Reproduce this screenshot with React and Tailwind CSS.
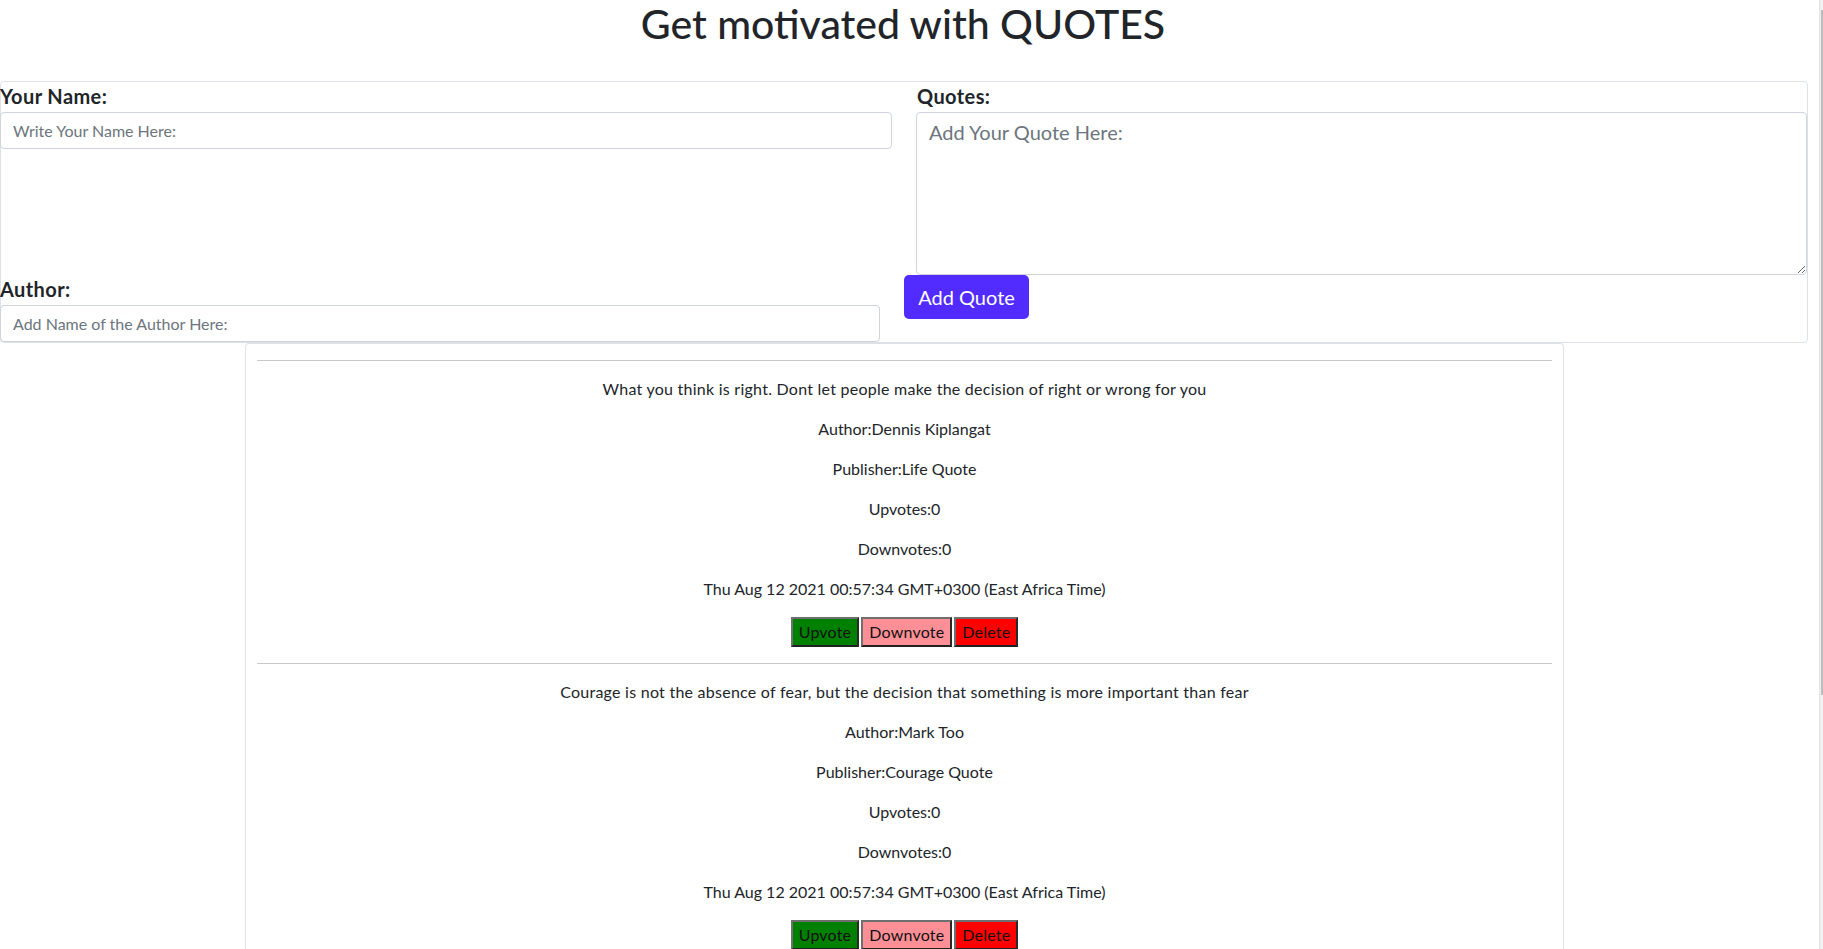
import React from "react";

const quotes = [
  {
    text: "What you think is right. Dont let people make the decision of right or wrong for you",
    author: "Dennis Kiplangat",
    publisher: "Life Quote",
  },
  {
    text: "Courage is not the absence of fear, but the decision that something is more important than fear",
    author: "Mark Too",
    publisher: "Courage Quote",
  },
];

const date = "Thu Aug 12 2021 00:57:34 GMT+0300 (East Africa Time)";

function VoteButton({ label, className }) {
  return (
    <button
      className={`h-[30px] px-[6px] text-[16px] leading-[24px] tracking-[0.2px] text-[#111] border-2 border-t-[#6f6f6f] border-l-[#6f6f6f] border-b-[#202020] border-r-[#2a2a2a] ${className}`}
    >
      {label}
    </button>
  );
}

function Quote({ q }) {
  return (
    <div>
      <hr className="border-0 border-t border-[#c8c8c8] my-[16px]" />
      <div className="text-center text-[16px] leading-[24px] text-[#212529]">
        <p className="mb-[16px] tracking-[0.25px]">{q.text}</p>
        <p className="mb-[16px]">Author:{q.author}</p>
        <p className="mb-[16px]">Publisher:{q.publisher}</p>
        <p className="mb-[16px]">Upvotes:0</p>
        <p className="mb-[16px]">Downvotes:0</p>
        <p className="mb-[16px]">{date}</p>
        <div className="flex justify-center gap-[2px]">
          <VoteButton label="Upvote" className="bg-[#008000]" />
          <VoteButton label="Downvote" className="bg-[#fe8f96]" />
          <VoteButton label="Delete" className="bg-[#ff0000]" />
        </div>
      </div>
    </div>
  );
}

export default function App() {
  return (
    <div
      className="relative w-full h-[949px] overflow-hidden bg-white text-[#212529]"
      style={{ fontFamily: "Lato, 'Noto Sans', sans-serif" }}
    >
      <h1 className="w-[1806px] text-center text-[41px] leading-[48px] font-medium text-[#212529] mb-[33px]">
        Get motivated with QUOTES
      </h1>

      <div className="flex w-[1808px] border border-[#dee2e6] rounded-[4px]">
        <div className="flex flex-col w-[892px] -ml-px">
          <label className="block h-[30px] text-[20px] leading-[28px] tracking-[0.4px] font-bold text-[#212529]">
            Your Name:
          </label>
          <input
            placeholder="Write Your Name Here:"
            className="h-[37px] w-[892px] border border-[#ced4da] rounded-[4px] px-[12px] text-[16px] placeholder:text-[#6c757d] outline-none"
          />
          <label className="block mt-[126px] h-[30px] text-[20px] leading-[28px] tracking-[0.4px] font-bold text-[#212529]">
            Author:
          </label>
          <input
            placeholder="Add Name of the Author Here:"
            className="h-[37px] w-[880px] border border-[#ced4da] rounded-[4px] px-[12px] text-[16px] placeholder:text-[#6c757d] outline-none"
          />
        </div>
        <div className="flex flex-col ml-[24px] w-[891px]">
          <label className="block h-[30px] pl-[1px] text-[20px] leading-[28px] tracking-[0.4px] font-bold text-[#212529]">
            Quotes:
          </label>
          <textarea
            placeholder="Add Your Quote Here:"
            className="h-[163px] w-[891px] border border-[#ced4da] rounded-[4px] px-[12px] py-[4px] text-[20px] leading-[30px] placeholder:text-[#6c757d] outline-none"
          />
          <button className="-ml-[12px] h-[44px] w-[125px] rounded-[5px] bg-[#512bff] text-white text-[20px] leading-[28px]">
            Add Quote
          </button>
        </div>
      </div>

      <div className="ml-[245px] w-[1319px] min-h-[700px] border-x border-t border-[#dee2e6] rounded-t-[4px] px-[11px]">
        {quotes.map((q, i) => (
          <Quote key={i} q={q} />
        ))}
      </div>

      <div className="absolute top-0 right-0 w-[4px] h-[949px] bg-[#f0f0f0] border-l border-[#e2e2e2]">
        <div className="ml-[1px] mt-[10px] w-[2px] h-[685px] bg-[#bdbdbd]" />
      </div>
    </div>
  );
}
